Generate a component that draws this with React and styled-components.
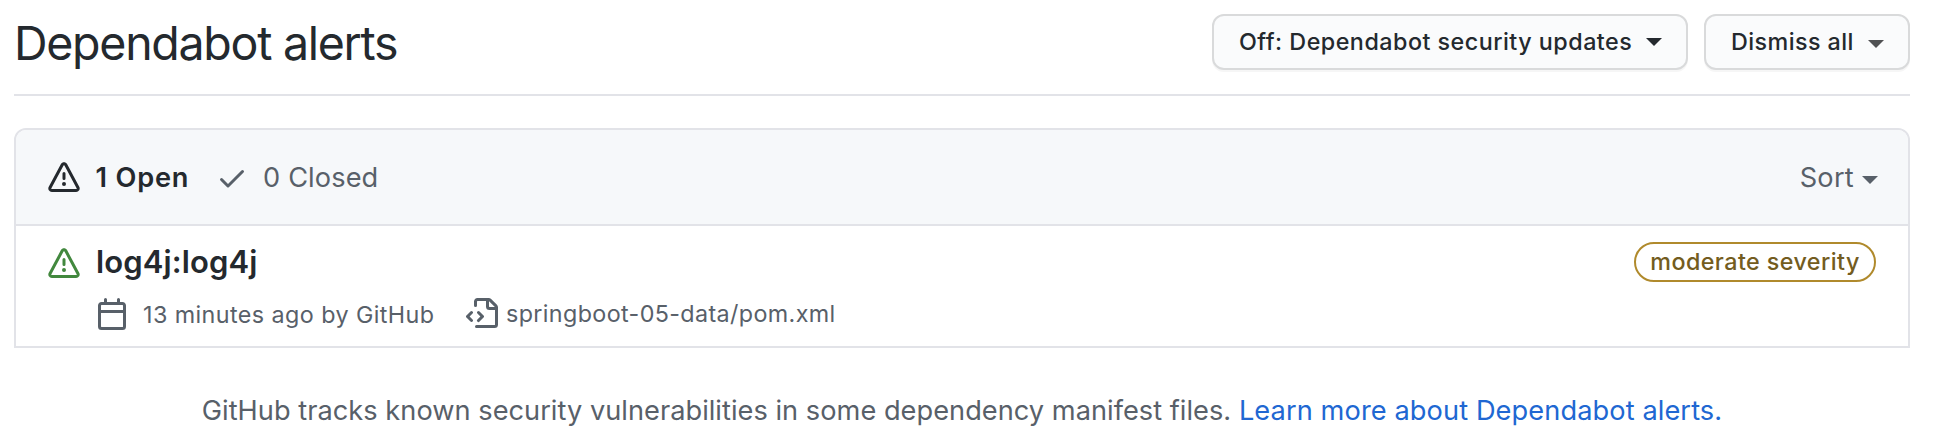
import React from 'react';
import styled, { createGlobalStyle } from 'styled-components';

const GlobalStyle = createGlobalStyle`
  *, *::before, *::after { box-sizing: border-box; }
  body {
    margin: 0;
    background: #fff;
    color: #24292e;
    font-family: Inter, "Liberation Sans", sans-serif;
    -webkit-font-smoothing: antialiased;
  }
`;

const Page = styled.main`
  padding: 0 24px 0 14px;
`;

const Subhead = styled.header`
  display: flex;
  align-items: flex-start;
  justify-content: space-between;
  height: 96px;
  padding-top: 14px;
  border-bottom: 2px solid #e2e3e8;
`;

const Title = styled.h1`
  margin: 0;
  font-size: 46.5px;
  font-weight: 400;
  line-height: 58px;
  letter-spacing: -1.276px;
  white-space: nowrap;
`;

const Actions = styled.div`
  display: flex;
  gap: 16px;
`;

const Button = styled.button`
  display: flex;
  align-items: center;
  justify-content: space-between;
  width: ${(p) => p.$width}px;
  height: 56px;
  padding: 0 24px 0 25px;
  border: 2px solid #d9dadb;
  border-radius: 12px;
  background: #fafbfc;
  box-shadow: 0 2px 0 rgba(27, 31, 35, 0.04);
  color: #24292e;
  font: 500 23.3px/52px Inter, "Liberation Sans", sans-serif;
  letter-spacing: ${(p) => p.$spacing}px;
  white-space: nowrap;
`;

const Caret = styled.span`
  width: 0;
  height: 0;
  margin-top: ${(p) => p.$drop || 0}px;
  border: 8px solid transparent;
  border-top-color: ${(p) => p.$color || 'currentColor'};
  border-bottom: 0;
`;

const Box = styled.section`
  margin-top: 32px;
  border: 2px solid #e2e3e8;
  border-radius: 12px 12px 0 0;
  overflow: hidden;
`;

const BoxHeader = styled.div`
  display: flex;
  align-items: center;
  height: 96px;
  padding: 2px 30px 0 32px;
  border-bottom: 2px solid #e2e3e8;
  background: #f6f8fa;
  color: #586069;
  font-size: 27.2px;
  line-height: 32px;
  white-space: nowrap;
`;

const Tab = styled.div`
  display: flex;
  align-items: center;
  gap: 15.5px;
  margin-right: 26.4px;
  color: ${(p) => (p.$selected ? '#24292e' : '#586069')};
  font-weight: ${(p) => (p.$selected ? 600 : 400)};
  letter-spacing: ${(p) => (p.$selected ? 0.8 : 0.11)}px;
`;

const Sort = styled.div`
  display: flex;
  align-items: center;
  gap: 8px;
  margin-left: auto;
  letter-spacing: 0.26px;
`;

const Row = styled.article`
  display: flex;
  align-items: flex-start;
  gap: 16px;
  height: 120px;
  padding: 16px 32px 0;
`;

const Status = styled.div`
  display: flex;
  padding-top: 6px;
  color: #42883e;
`;

const Details = styled.div`
  flex: 1;
  padding-top: 2px;
`;

const PackageName = styled.h2`
  margin: 0;
  font-size: 31px;
  font-weight: 600;
  line-height: 36px;
  letter-spacing: 0.125px;
`;

const Meta = styled.div`
  display: flex;
  align-items: flex-start;
  margin-top: 18px;
  color: #586069;
  font-size: 23.3px;
  white-space: nowrap;
`;

const Opened = styled.div`
  display: flex;
  width: 370px;
  gap: 15px;
  line-height: 34px;
  letter-spacing: 0.43px;
`;

const Manifest = styled.div`
  display: flex;
  gap: 8px;
  line-height: 31px;
  letter-spacing: 0.38px;
`;

const Severity = styled.span`
  width: 242px;
  height: 40px;
  border: 2px solid #b08a2c;
  border-radius: 20px;
  color: #735c20;
  font-size: 23.3px;
  font-weight: 500;
  line-height: 36px;
  letter-spacing: 0.44px;
  text-align: center;
  white-space: nowrap;
`;

const Note = styled.p`
  margin: 45px 0 0;
  color: #586069;
  font-size: 27.2px;
  line-height: 36px;
  letter-spacing: 0.028px;
  text-align: center;
  white-space: nowrap;
`;

const Link = styled.a`
  color: #2067d2;
  letter-spacing: 0.096px;
  text-decoration: none;
`;

const Svg = styled.svg`
  display: block;
  flex: none;
  fill: currentColor;
`;

const paths = {
  alert:
    'M8.22 1.754a.25.25 0 00-.44 0L1.698 13.132a.25.25 0 00.22.368h12.164a.25.25 0 00.22-.368L8.22 1.754zm-1.763-.707c.659-1.234 2.427-1.234 3.086 0l6.082 11.378A1.75 1.75 0 0114.082 15H1.918a1.75 1.75 0 01-1.543-2.575L6.457 1.047zM9 11a1 1 0 11-2 0 1 1 0 012 0zm-.25-5.25a.75.75 0 00-1.5 0v2.5a.75.75 0 001.5 0v-2.5z',
  check:
    'M13.78 4.22a.75.75 0 010 1.06l-7.25 7.25a.75.75 0 01-1.06 0L2.22 9.28a.75.75 0 011.06-1.06L6 10.94l6.72-6.72a.75.75 0 011.06 0z',
  calendar:
    'M4.75 0a.75.75 0 01.75.75V2h5V.75a.75.75 0 011.5 0V2h1.25c.966 0 1.75.784 1.75 1.75v10.5A1.75 1.75 0 0113.25 16H2.75A1.75 1.75 0 011 14.25V3.75C1 2.784 1.784 2 2.75 2H4V.75A.75.75 0 014.75 0zm0 3.5h8.5a.25.25 0 01.25.25V6h-11V3.75a.25.25 0 01.25-.25h2zm-2.25 4v6.75c0 .138.112.25.25.25h10.5a.25.25 0 00.25-.25V7.5h-11z',
  fileCode:
    'M4 1.75C4 .784 4.784 0 5.75 0h5.586c.464 0 .909.184 1.237.513l2.914 2.914c.329.328.513.773.513 1.237v8.586A1.75 1.75 0 0114.25 15h-9a.75.75 0 010-1.5h9a.25.25 0 00.25-.25V6h-2.75A1.75 1.75 0 0110 4.25V1.5H5.75a.25.25 0 00-.25.25v2a.75.75 0 01-1.5 0v-2zm7.5-.188V4.25c0 .138.112.25.25.25h2.688a.252.252 0 00-.011-.013l-2.914-2.914a.272.272 0 00-.013-.011zM5.72 6.72a.75.75 0 000 1.06l1.47 1.47-1.47 1.47a.75.75 0 101.06 1.06l2-2a.75.75 0 000-1.06l-2-2a.75.75 0 00-1.06 0zM3.28 7.78a.75.75 0 00-1.06-1.06l-2 2a.75.75 0 000 1.06l2 2a.75.75 0 001.06-1.06L1.81 9.25l1.47-1.47z',
};

const Icon = ({ name }) => (
  <Svg viewBox="0 0 16 16" width="32" height="32" aria-hidden="true">
    <path fillRule="evenodd" d={paths[name]} />
  </Svg>
);

export default function App() {
  return (
    <>
      <GlobalStyle />
      <Page>
        <Subhead>
          <Title>Dependabot alerts</Title>
          <Actions>
            <Button $width={476} $spacing={0.49}>
              Off: Dependabot security updates
              <Caret />
            </Button>
            <Button $width={206} $spacing={0.44}>
              Dismiss all
              <Caret $drop={4} $color="#505153" />
            </Button>
          </Actions>
        </Subhead>

        <Box>
          <BoxHeader>
            <Tab $selected>
              <Icon name="alert" />
              1 Open
            </Tab>
            <Tab>
              <Icon name="check" />
              0 Closed
            </Tab>
            <Sort>
              Sort
              <Caret $drop={4} />
            </Sort>
          </BoxHeader>
          <Row>
            <Status>
              <Icon name="alert" />
            </Status>
            <Details>
              <PackageName>log4j:log4j</PackageName>
              <Meta>
                <Opened>
                  <Icon name="calendar" />
                  13 minutes ago by GitHub
                </Opened>
                <Manifest>
                  <Icon name="fileCode" />
                  springboot-05-data/pom.xml
                </Manifest>
              </Meta>
            </Details>
            <Severity>moderate severity</Severity>
          </Row>
        </Box>

        <Note>
          GitHub tracks known security vulnerabilities in some dependency manifest files.{' '}
          <Link>Learn more about Dependabot alerts.</Link>
        </Note>
      </Page>
    </>
  );
}
